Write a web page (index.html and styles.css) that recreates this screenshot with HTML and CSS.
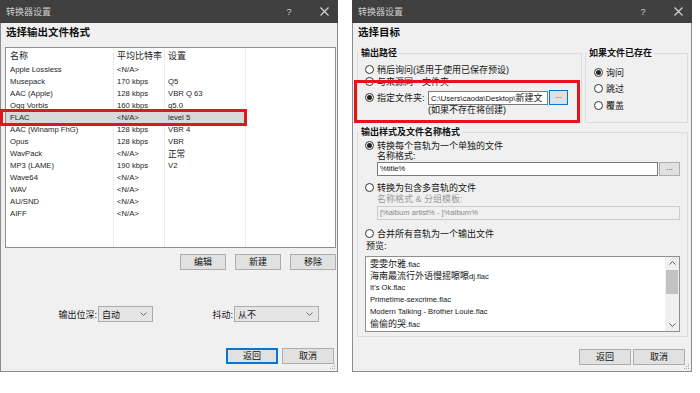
FILE: index.html
```html
<!DOCTYPE html>
<html>
<head>
    <meta charset="utf-8">
    <title>转换器设置</title>
    <link rel="stylesheet" href="styles.css">
</head>
<body>
<div class="screen">

    <!-- left dialog: output format list -->
    <section class="dialog dialog-format">
        <header class="titlebar">
            <span class="title">转换器设置</span>
            <span class="tb-help">?</span>
            <span class="tb-close"><svg width="9" height="9" viewBox="0 0 9 9"><path d="M0.5 0.5 L8.5 8.5 M8.5 0.5 L0.5 8.5" stroke="#d6d6d6" stroke-width="1.1"/></svg></span>
        </header>
        <div class="body">
            <h1 class="heading">选择输出文件格式</h1>
            <div class="listview">
                <div class="lv-head">
                    <span>名称</span><span>平均比特率</span><span>设置</span>
                </div>
                <div class="lv-row"><span>Apple Lossless</span><span>&lt;N/A&gt;</span><span></span></div>
                <div class="lv-row"><span>Musepack</span><span>170 kbps</span><span>Q5</span></div>
                <div class="lv-row"><span>AAC (Apple)</span><span>128 kbps</span><span>VBR Q 63</span></div>
                <div class="lv-row"><span>Ogg Vorbis</span><span>160 kbps</span><span>q5.0</span></div>
                <div class="lv-row sel"><span>FLAC</span><span>&lt;N/A&gt;</span><span>level 5</span></div>
                <div class="lv-row"><span>AAC (Winamp FhG)</span><span>128 kbps</span><span>VBR 4</span></div>
                <div class="lv-row"><span>Opus</span><span>128 kbps</span><span>VBR</span></div>
                <div class="lv-row"><span>WavPack</span><span>&lt;N/A&gt;</span><span class="cn">正常</span></div>
                <div class="lv-row"><span>MP3 (LAME)</span><span>190 kbps</span><span>V2</span></div>
                <div class="lv-row"><span>Wave64</span><span>&lt;N/A&gt;</span><span></span></div>
                <div class="lv-row"><span>WAV</span><span>&lt;N/A&gt;</span><span></span></div>
                <div class="lv-row"><span>AU/SND</span><span>&lt;N/A&gt;</span><span></span></div>
                <div class="lv-row"><span>AIFF</span><span>&lt;N/A&gt;</span><span></span></div>
            </div>
            <div class="btn-row list-btns">
                <span class="btn">编辑</span>
                <span class="btn">新建</span>
                <span class="btn">移除</span>
            </div>
            <div class="opt-row">
                <span class="opt-label depth-label">输出位深:</span>
                <span class="combo depth-combo">自动<svg class="chev" width="7" height="4" viewBox="0 0 7 4"><path d="M0.5 0.5 L3.5 3.5 L6.5 0.5" fill="none" stroke="#6a6a6a"/></svg></span>
                <span class="opt-label dither-label">抖动:</span>
                <span class="combo dither-combo">从不<svg class="chev" width="7" height="4" viewBox="0 0 7 4"><path d="M0.5 0.5 L3.5 3.5 L6.5 0.5" fill="none" stroke="#6a6a6a"/></svg></span>
            </div>
            <div class="btn-row dialog-btns left-btns">
                <span class="btn btn-default">返回</span>
                <span class="btn">取消</span>
            </div>
            <div class="annot annot-format"></div>
            <svg class="grip" width="7" height="7" viewBox="0 0 7 7"><g fill="#a8a8a8"><rect x="5" y="1" width="1" height="1"/><rect x="3" y="3" width="1" height="1"/><rect x="5" y="3" width="1" height="1"/><rect x="1" y="5" width="1" height="1"/><rect x="3" y="5" width="1" height="1"/><rect x="5" y="5" width="1" height="1"/></g></svg>
        </div>
    </section>

    <!-- right dialog: output target -->
    <section class="dialog dialog-target">
        <header class="titlebar">
            <span class="title">转换器设置</span>
            <span class="tb-help">?</span>
            <span class="tb-close"><svg width="9" height="9" viewBox="0 0 9 9"><path d="M0.5 0.5 L8.5 8.5 M8.5 0.5 L0.5 8.5" stroke="#d6d6d6" stroke-width="1.1"/></svg></span>
        </header>
        <div class="body">
            <h1 class="heading">选择目标</h1>
            <div class="grp-row">
                <fieldset class="grp grp-path">
                    <legend>输出路径</legend>
                    <div class="grp-body path-body">
                        <div class="radio-row"><span class="radio"></span><span>稍后询问(适用于使用已保存预设)</span></div>
                        <div class="radio-row"><span class="radio"></span><span>与来源同一文件夹</span></div>
                        <div class="radio-row path-row">
                            <span class="radio on"></span>
                            <span class="path-label">指定文件夹:</span>
                            <span class="textbox path-box"><span class="lat">C:\Users\caoda\Desktop\</span>新建文</span>
                            <span class="dots-btn focus">...</span>
                        </div>
                        <div class="path-note">(如果不存在将创建)</div>
                    </div>
                </fieldset>
                <fieldset class="grp grp-exists">
                    <legend>如果文件已存在</legend>
                    <div class="grp-body exists-body">
                        <div class="radio-row"><span class="radio on"></span><span>询问</span></div>
                        <div class="radio-row"><span class="radio"></span><span>跳过</span></div>
                        <div class="radio-row"><span class="radio"></span><span>覆盖</span></div>
                    </div>
                </fieldset>
            </div>
            <fieldset class="grp grp-style">
                <legend>输出样式及文件名称格式</legend>
                <div class="grp-body style-body">
                    <div class="radio-row"><span class="radio on"></span><span>转换每个音轨为一个单独的文件</span></div>
                    <div class="sub-label">名称格式:</div>
                    <div class="field-row">
                        <span class="textbox lat">%title%</span>
                        <span class="dots-btn">...</span>
                    </div>
                    <div class="radio-row multi-row"><span class="radio"></span><span>转换为包含多音轨的文件</span></div>
                    <div class="sub-label grey">名称格式 &amp; 分组模板:</div>
                    <div class="textbox disabled lat">[%album artist% - ]%album%</div>
                    <div class="radio-row merge-row"><span class="radio"></span><span>合并所有音轨为一个输出文件</span></div>
                    <div class="preview-label">预览:</div>
                    <div class="preview">
                        <div class="preview-items">
                            <div>雯雯尔雅<span class="lat">.flac</span></div>
                            <div>海南最流行外语慢摇嚓嚓<span class="lat">dj.flac</span></div>
                            <div class="lat">It's Ok.flac</div>
                            <div class="lat">Primetime-sexcrime.flac</div>
                            <div class="lat">Modern Talking - Brother Louie.flac</div>
                            <div>偷偷的哭<span class="lat">.flac</span></div>
                        </div>
                        <div class="scrollbar">
                            <span class="sb-arrow"><svg width="7" height="4" viewBox="0 0 7 4"><path d="M0.5 3.5 L3.5 0.5 L6.5 3.5" fill="none" stroke="#606060"/></svg></span>
                            <span class="sb-thumb"></span>
                            <span class="sb-arrow sb-down"><svg width="7" height="4" viewBox="0 0 7 4"><path d="M0.5 0.5 L3.5 3.5 L6.5 0.5" fill="none" stroke="#606060"/></svg></span>
                        </div>
                    </div>
                </div>
            </fieldset>
            <div class="btn-row dialog-btns right-btns">
                <span class="btn">返回</span>
                <span class="btn">取消</span>
            </div>
            <div class="annot annot-path"></div>
            <svg class="grip" width="7" height="7" viewBox="0 0 7 7"><g fill="#a8a8a8"><rect x="5" y="1" width="1" height="1"/><rect x="3" y="3" width="1" height="1"/><rect x="5" y="3" width="1" height="1"/><rect x="1" y="5" width="1" height="1"/><rect x="3" y="5" width="1" height="1"/><rect x="5" y="5" width="1" height="1"/></g></svg>
        </div>
    </section>

</div>
</body>
</html>
```

FILE: styles.css
```css
* {
    box-sizing: border-box;
}
body {
    margin: 0;
    background-color: #ffffff;
    color: #141414;
    font-family: "Liberation Sans", "Noto Sans CJK SC", sans-serif;
    font-size: 9px;
}
.screen {
    display: flex;
    gap: 14px;
    width: 700px;
    height: 393px;
}
.dialog {
    display: flex;
    flex-direction: column;
    height: 372px;
}
.dialog-format {
    width: 338px;
}
.dialog-target {
    width: 340px;
}

/* title bar */
.titlebar {
    height: 23px;
    flex: none;
    display: flex;
    align-items: center;
    padding-left: 6px;
    background-color: #404040;
    color: #cfcfcf;
}
.titlebar .title {
    flex: 1;
    font-size: 9px;
}
.tb-help {
    width: 26px;
    text-align: center;
    font-size: 9px;
}
.tb-close {
    width: 28px;
    margin-left: 8px;
    display: flex;
    justify-content: center;
}

.body {
    flex: 1;
    position: relative;
    display: flex;
    flex-direction: column;
    background-color: #f0f0f0;
    border: 1px solid #8c8c8c;
    border-top: none;
}
.heading {
    margin: 0;
    padding: 1px 0 0 5px;
    height: 17px;
    line-height: 16px;
    font-size: 10.5px;
    font-weight: bold;
    color: #111;
}

/* format list */
.listview {
    margin: 7px 1px 0 4px;
    height: 201px;
    flex: none;
    border: 1px solid #8f8f8f;
    background-color: #fff;
    background-image: linear-gradient(#ececec, #ececec), linear-gradient(#ececec, #ececec), linear-gradient(#ececec, #ececec);
    background-size: 1px 100%;
    background-position: 107px 0, 158px 0, 239px 0;
    background-repeat: no-repeat;
}
.lv-head, .lv-row {
    display: grid;
    grid-template-columns: 107px 51px 81px;
    width: 239px;
}
.lv-head {
    height: 16px;
    line-height: 16px;
    font-size: 9px;
    color: #222;
}
.lv-head span, .lv-row span {
    padding-left: 4px;
    white-space: nowrap;
}
.lv-row {
    height: 12px;
    line-height: 12px;
    font-size: 7.7px;
    color: #1e1e1e;
}
.lv-row.sel {
    background-color: #d9d9d9;
}
.lv-row .cn {
    font-size: 8.6px;
}

/* buttons */
.btn-row {
    display: flex;
    justify-content: flex-end;
    flex: none;
}
.btn {
    height: 16px;
    line-height: 14px;
    border: 1px solid #adadad;
    background-color: #e1e1e1;
    text-align: center;
    font-size: 9px;
    color: #111;
}
.list-btns {
    margin-top: 6px;
    padding-right: 1px;
    gap: 9px;
}
.list-btns .btn {
    width: 46px;
}
.dialog-btns .btn {
    width: 52px;
}
.left-btns {
    margin-top: 26px;
    padding-right: 3px;
    gap: 4px;
}
.right-btns {
    margin-top: 12px;
    padding-right: 6px;
    gap: 2px;
}
.btn-default {
    border-color: #0078d7;
    box-shadow: inset 0 0 0 1px #0078d7;
}

/* bit depth / dither */
.opt-row {
    display: flex;
    align-items: center;
    height: 16px;
    margin-top: 36px;
    padding-left: 54px;
    flex: none;
}
.opt-label {
    text-align: right;
    margin-right: 1px;
}
.depth-label {
    width: 42px;
}
.dither-label {
    width: 26px;
    margin-left: 54px;
}
.combo {
    height: 16px;
    display: flex;
    align-items: center;
    padding-left: 3px;
    border: 1px solid #adadad;
    background-color: #e5e5e5;
}
.combo .chev {
    margin-left: auto;
    margin-right: 5px;
}
.depth-combo {
    width: 55px;
}
.dither-combo {
    width: 85px;
}

/* red annotation boxes */
.annot {
    position: absolute;
    border: 3px solid #e2141c;
}
.annot-format {
    left: -1px;
    top: 86px;
    width: 247px;
    height: 17px;
}
.annot-path {
    left: 1px;
    top: 57px;
    width: 226px;
    height: 43px;
}
.grip {
    position: absolute;
    right: 1px;
    bottom: 1px;
}

/* group boxes */
.grp-row {
    display: flex;
    gap: 3px;
    margin-top: 7px;
    padding: 0 3px 0 4px;
    flex: none;
}
.grp {
    margin: 0;
    padding: 0;
    min-width: 0;
    border: 1px solid #dcdcdc;
}
.grp legend {
    margin-left: 1px;
    padding: 0 2px;
    line-height: 12px;
    font-size: 9px;
    font-weight: bold;
    color: #111;
}
.grp-path {
    width: 225px;
}
.grp-exists {
    width: 103px;
}
.path-body {
    padding: 4px 0 6px 7px;
}
.exists-body {
    padding: 7px 0 0 8px;
    display: flex;
    flex-direction: column;
    gap: 4.5px;
}
.radio-row {
    display: flex;
    align-items: center;
    height: 12px;
    white-space: nowrap;
}
.radio {
    width: 9px;
    height: 9px;
    margin-right: 3px;
    flex: none;
    display: flex;
    align-items: center;
    justify-content: center;
    border: 1px solid #333;
    border-radius: 50%;
    background-color: #fff;
}
.radio.on::after {
    content: "";
    width: 5px;
    height: 5px;
    border-radius: 50%;
    background-color: #222;
}
.path-row {
    height: 15px;
    margin-top: 3px;
}
.path-label {
    width: 51px;
    flex: none;
}
.textbox {
    height: 14px;
    line-height: 12px;
    padding-left: 2px;
    border: 1px solid #7a7a7a;
    background-color: #fff;
    overflow: hidden;
    white-space: nowrap;
}
.lat {
    font-size: 7.6px;
}
.path-box {
    width: 120px;
    flex: none;
    font-size: 9px;
}
.dots-btn {
    width: 21px;
    height: 14px;
    line-height: 10px;
    text-align: center;
    font-size: 8px;
    color: #444;
    border: 1px solid #adadad;
    background-color: #e1e1e1;
    flex: none;
}
.dots-btn.focus {
    width: 19px;
    height: 15px;
    margin-left: 1px;
    border-color: #0078d7;
    box-shadow: inset 0 0 0 1px #cce4f7;
}
.path-note {
    margin-left: 63px;
    height: 11px;
    line-height: 11px;
}

.grp-style {
    margin: 3px 3px 0 4px;
    flex: none;
}
.style-body {
    padding: 1px 7px 4px 7px;
}
.sub-label {
    margin-left: 12px;
    height: 11px;
    line-height: 11px;
}
.sub-label.grey {
    height: 12px;
    line-height: 12px;
    color: #9a9a9a;
}
.field-row {
    display: flex;
    gap: 1px;
    margin-left: 12px;
    height: 14px;
}
.field-row .textbox {
    flex: 1;
}
.textbox.disabled {
    margin: 1px 0 0 12px;
    border-color: #cccccc;
    background-color: #f0f0f0;
    color: #8a8a8a;
}
.multi-row {
    margin-top: 5px;
}
.merge-row {
    margin-top: 7px;
}
.preview-label {
    margin: 1px 0 0 1px;
    height: 12px;
    line-height: 12px;
}
.preview {
    display: flex;
    height: 76px;
    margin-top: 4px;
    border: 1px solid #8f8f8f;
    background-color: #fff;
}
.preview-items {
    flex: 1;
    padding: 1px 0 0 4px;
    font-size: 9px;
}
.preview-items div {
    height: 12px;
    line-height: 12px;
    white-space: nowrap;
}
.scrollbar {
    width: 14px;
    display: flex;
    flex-direction: column;
    background-color: #f0f0f0;
}
.sb-arrow {
    height: 12px;
    display: flex;
    align-items: center;
    justify-content: center;
}
.sb-down {
    margin-top: auto;
}
.sb-thumb {
    height: 24px;
    margin: 1px 1px 0;
    background-color: #c2c2c2;
}
```
